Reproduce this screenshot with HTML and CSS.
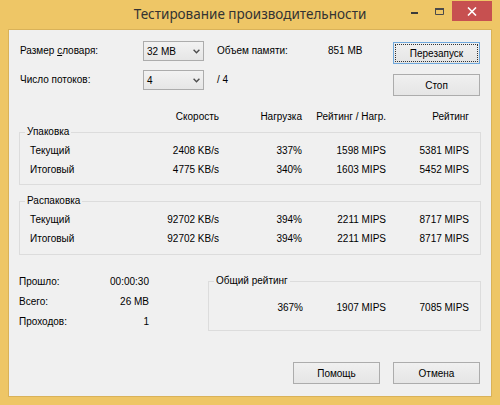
FILE: index.html
```html
<!DOCTYPE html>
<html lang="ru">
<head>
<meta charset="utf-8">
<title>Тестирование производительности</title>
<link rel="stylesheet" href="styles.css">
</head>
<body>
<div class="window">
  <header class="titlebar">
    <div class="spacer"></div>
    <h1 class="title">Тестирование производительности</h1>
    <div class="caption-buttons">
      <span class="cb cb-min"><svg width="7" height="2" viewBox="0 0 7 2"><rect width="7" height="2" fill="#3a3a3a"/></svg></span>
      <span class="cb cb-max"><svg width="9" height="7" viewBox="0 0 9 7"><path d="M0.5 1.5h8v5h-8z" fill="none" stroke="#4a4a4a"/><rect x="0" y="0" width="9" height="2" fill="#4a4a4a"/></svg></span>
      <span class="cb cb-close"><svg width="10" height="9" viewBox="0 0 10 9"><path d="M1 0.5l8 8M9 0.5l-8 8" stroke="#fff" stroke-width="1.6" fill="none"/></svg></span>
    </div>
  </header>
  <main class="client">
    <section class="settings">
      <div class="settings-grid">
        <span class="lbl">Размер <u>с</u>ловаря:</span>
        <div class="combo"><span>32 MB</span><svg width="7" height="5" viewBox="0 0 7 5"><path d="M0.6 0.8l2.9 2.9 2.9-2.9" stroke="#4d4d4d" stroke-width="1.4" fill="none"/></svg></div>
        <span class="lbl pad">Объем памяти:</span>
        <span class="lbl">851 MB</span>
        <span class="lbl">Число потоков:</span>
        <div class="combo"><span>4</span><svg width="7" height="5" viewBox="0 0 7 5"><path d="M0.6 0.8l2.9 2.9 2.9-2.9" stroke="#4d4d4d" stroke-width="1.4" fill="none"/></svg></div>
        <span class="lbl pad">/ 4</span>
        <span></span>
      </div>
      <div class="side-buttons">
        <button class="btn btn-default"><span class="focus">Перезапуск</span></button>
        <button class="btn">Стоп</button>
      </div>
    </section>

    <div class="cols header">
      <span></span>
      <span class="num">Скорость</span>
      <span class="num">Нагрузка</span>
      <span class="num">Рейтинг / Нагр.</span>
      <span class="num">Рейтинг</span>
    </div>

    <fieldset class="group">
      <legend>Упаковка</legend>
      <div class="cols row">
        <span>Текущий</span><span class="num">2408 KB/s</span><span class="num">337%</span><span class="num">1598 MIPS</span><span class="num">5381 MIPS</span>
      </div>
      <div class="cols row">
        <span>Итоговый</span><span class="num">4775 KB/s</span><span class="num">340%</span><span class="num">1603 MIPS</span><span class="num">5452 MIPS</span>
      </div>
    </fieldset>

    <fieldset class="group group-second">
      <legend>Распаковка</legend>
      <div class="cols row">
        <span>Текущий</span><span class="num">92702 KB/s</span><span class="num">394%</span><span class="num">2211 MIPS</span><span class="num">8717 MIPS</span>
      </div>
      <div class="cols row">
        <span>Итоговый</span><span class="num">92702 KB/s</span><span class="num">394%</span><span class="num">2211 MIPS</span><span class="num">8717 MIPS</span>
      </div>
    </fieldset>

    <section class="summary">
      <div class="stats">
        <span>Прошло:</span><span class="num">00:00:30</span>
        <span>Всего:</span><span class="num">26 MB</span>
        <span>Проходов:</span><span class="num">1</span>
      </div>
      <fieldset class="group total">
        <legend>Общий рейтинг</legend>
        <div class="total-row">
          <span class="num">367%</span><span class="num">1907 MIPS</span><span class="num">7085 MIPS</span>
        </div>
      </fieldset>
    </section>

    <footer class="footer">
      <button class="btn">Помощь</button>
      <button class="btn">Отмена</button>
    </footer>
  </main>
</div>
</body>
</html>
```

FILE: styles.css
```css
* { box-sizing: border-box; }

html, body {
  margin: 0;
  padding: 0;
  background: #eec666;
}

.window {
  width: 500px;
  height: 405px;
  background: #eec666;
  overflow: hidden;
  font-family: "Liberation Sans", Arial, sans-serif;
  font-size: 10px;
  color: #000;
}

.titlebar {
  height: 29px;
  display: grid;
  grid-template-columns: 1fr auto 1fr;
}

.title {
  margin: 0;
  font-family: "Noto Sans", "Open Sans", sans-serif;
  font-weight: normal;
  font-size: 13.5px;
  line-height: 29px;
  color: #333;
  white-space: nowrap;
}

.caption-buttons {
  display: flex;
  justify-content: flex-end;
  align-items: flex-start;
  padding: 1px 8px 0 0;
}

.cb {
  height: 20px;
  display: flex;
  align-items: center;
  justify-content: center;
}

.cb-min { width: 26px; padding-top: 3px; }
.cb-max { width: 25px; }
.cb-close { width: 40px; background: #c75050; }

.client {
  margin: 0 8px;
  height: 368px;
  background: #f0f0f0;
  border: 1px solid #d9b259;
  display: flex;
  flex-direction: column;
}

/* settings */
.settings {
  display: flex;
  padding: 11px 11px 0 11px;
}

.settings-grid {
  display: grid;
  grid-template-columns: 123px 61px 124px 65px;
  grid-template-rows: 20px 20px;
  row-gap: 9px;
  align-items: center;
}

.lbl { line-height: 14px; }
.pad { padding-left: 13px; }

.combo {
  height: 20px;
  border: 1px solid #acacac;
  background: linear-gradient(#f2f2f2, #e6e6e6);
  display: flex;
  align-items: center;
  justify-content: space-between;
  padding: 0 3px 0 3px;
}

.side-buttons {
  display: flex;
  flex-direction: column;
  gap: 10px;
  padding-top: 1px;
}

.btn {
  width: 87px;
  height: 22px;
  border: 1px solid #acacac;
  background: linear-gradient(#f0f0f0, #e5e5e5);
  font: inherit;
  color: #000;
  padding: 0;
  margin: 0;
  display: flex;
  align-items: center;
  justify-content: center;
}

.btn-default {
  border-color: #6fa8dc;
  padding: 2px;
}

.focus {
  display: flex;
  align-items: center;
  justify-content: center;
  width: 100%;
  height: 100%;
  outline: 1px dotted #333;
}

/* table */
.cols {
  display: grid;
  grid-template-columns: 109px 80px 83px 84px 83px;
}

.num { text-align: right; white-space: nowrap; }

.header {
  margin-top: 14px;
  padding-left: 21px;
  line-height: 14px;
}

.group {
  margin: 1px 10px 0;
  padding: 2px 0 5px 10px;
  border: 1px solid #dcdcdc;
  min-width: 0;
}

.group legend {
  margin-left: -5px;
  padding: 0 2px;
  line-height: 14px;
}

.group-second {
  margin-top: 9px;
  padding-bottom: 6px;
}

.row { line-height: 19px; }

/* summary */
.summary {
  display: flex;
  align-items: flex-start;
  margin-top: 17px;
}

.stats {
  margin-left: 10px;
  width: 130px;
  display: grid;
  grid-template-columns: 1fr auto;
  line-height: 20px;
}

.total {
  margin: 2px 10px 0 auto;
  width: 273px;
  padding: 10px 0 13px 0;
}

.total legend {
  margin-left: 5px;
}

.total-row {
  display: grid;
  grid-template-columns: 94px 83px 83px;
  line-height: 19px;
}

.footer {
  margin-top: 30px;
  display: flex;
  justify-content: flex-end;
  gap: 13px;
  padding-right: 11px;
}
```
